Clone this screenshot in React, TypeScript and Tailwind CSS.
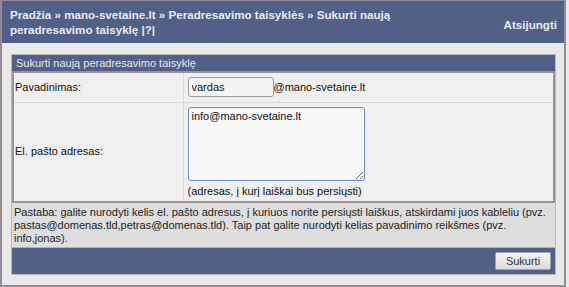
import React from 'react';

const App: React.FC = () => {
  return (
    <div className="w-[569px] h-[287px] bg-[#e9e9e9] font-['Liberation_Sans',Arial,sans-serif]">
      <div className="w-[566px] h-[287px] border-x-2 border-t border-b-2 border-[#958a93] flex flex-col">
        {/* Header */}
        <div className="h-[42px] bg-[#525f87] flex items-start justify-between pl-[8px] pr-[7px] text-[#e9ebf1] font-bold text-[11.6px] leading-[15px]">
          <div className="pt-[6px] w-[420px]">
            Pradžia » mano-svetaine.lt » Peradresavimo taisyklės » Sukurti naują peradresavimo taisyklę |?|
          </div>
          <div className="pt-[16px]">Atsijungti</div>
        </div>

        {/* Body */}
        <div className="pt-[11px] pl-[9px] pr-[8px]">
          <div className="border border-[#b9b9b9] bg-[#dedede]">
            <div className="h-[16px] bg-[#525f87] text-[#e4e7ef] text-[11px] leading-[16px] pl-[4px]">
              Sukurti naują peradresavimo taisyklę
            </div>
            <table className="w-full border-collapse border-2 border-[#9c909a] bg-[#efefef] text-[11px] text-[#111]">
              <tbody>
                <tr className="h-[30px] border-b border-[#d8d8d8]">
                  <td className="w-[170px] pl-[1px] border-r border-[#d8d8d8]">Pavadinimas:</td>
                  <td className="pl-[4px]">
                    <div className="flex items-center">
                      <input
                        readOnly
                        value="vardas"
                        className="w-[86px] h-[20px] px-[3px] bg-[#f5f5f5] border border-[#9a9a9a] rounded-[3px] text-[11px] outline-none"
                      />
                      <span>@mano-svetaine.lt</span>
                    </div>
                  </td>
                </tr>
                <tr>
                  <td className="pl-[1px] border-r border-[#d8d8d8]">El. pašto adresas:</td>
                  <td className="pl-[4px] pt-[4px] pb-[2px]">
                    <textarea
                      readOnly
                      value="info@mano-svetaine.lt"
                      className="block w-[177px] h-[74px] px-[3px] py-[1px] bg-[#f7f7f7] border border-[#6d8fc9] rounded-[3px] text-[11px] leading-[14px] outline-none resize"
                    />
                    <div className="mt-[3px] leading-[15px]">(adresas, į kurį laiškai bus persiųsti)</div>
                  </td>
                </tr>
              </tbody>
            </table>
            <div className="px-[2px] pt-[3px] pb-[2px] text-[11px] leading-[13px] text-[#222]">
              Pastaba: galite nurodyti kelis el. pašto adresus, į kuriuos norite persiųsti laiškus, atskirdami juos kableliu (pvz. pastas@domenas.tld,petras@domenas.tld). Taip pat galite nurodyti kelias pavadinimo reikšmes (pvz. info,jonas).
            </div>
            <div className="h-[27px] bg-[#525f87] border-t border-[#b0b0b0] flex items-center justify-end pr-[4px]">
              <button className="w-[56px] h-[18px] bg-gradient-to-b from-[#f4f4f4] to-[#dcdcdc] border border-[#a4a4a4] rounded-[2px] text-[11px] text-[#333]">
                Sukurti
              </button>
            </div>
          </div>
        </div>
      </div>
    </div>
  );
};

export default App;
